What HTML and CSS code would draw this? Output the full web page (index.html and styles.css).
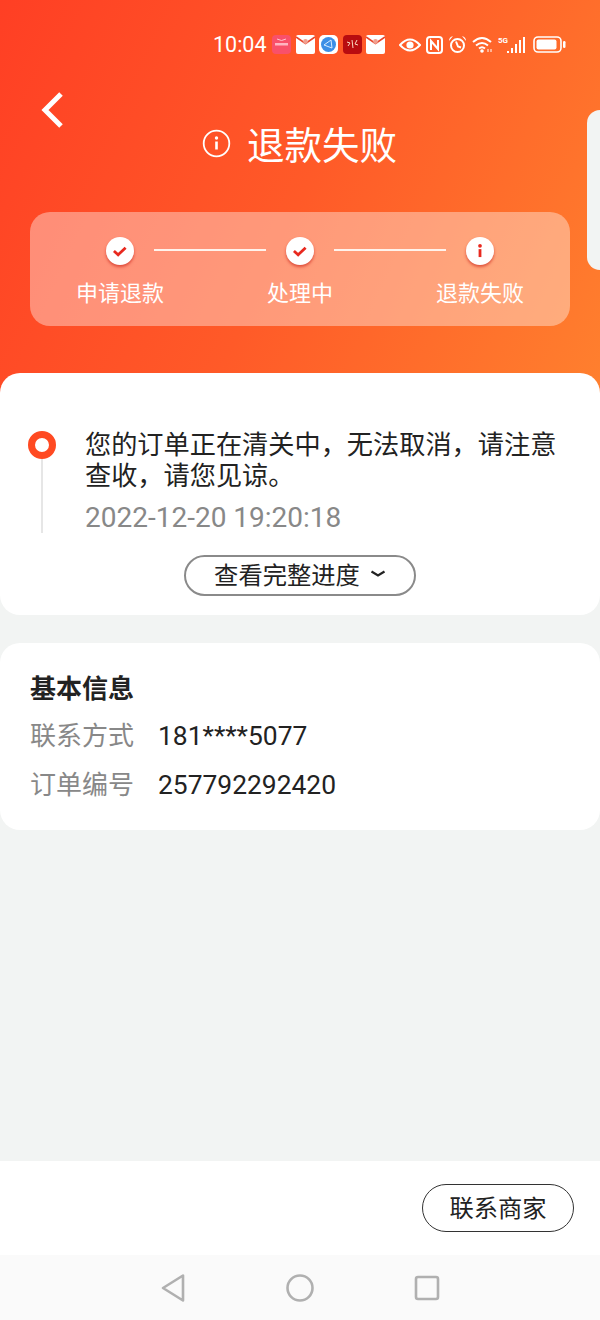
FILE: index.html
```html
<!DOCTYPE html>
<html lang="zh-CN">
<head>
  <meta charset="UTF-8">
  <meta name="viewport" content="width=device-width, initial-scale=1.0">
  <title>退款失败</title>
  <link rel="stylesheet" href="styles.css">
</head>
<body>
  <div class="page">
    <div class="top">
      <div class="status">
        <span class="time">10:04</span>
        <div class="notif">
          <svg width="19" height="19" viewBox="0 0 19 19"><rect width="19" height="19" rx="4" fill="#f9506a"/><path d="M5 4q4.500 3 9 0" stroke="#ffc4cf" fill="none"/><rect x="3" y="8" width="13" height="2.500" fill="#ffb4c2"/></svg>
          <svg width="19" height="19" viewBox="0 0 19 19"><rect width="19" height="19" rx="2" fill="#fff"/><path d="M0 2l9.500 6.500L19 2" fill="none" stroke="#e8452c" stroke-width="1.600"/><circle cx="9.500" cy="6.500" r="2.400" fill="#f0a090"/></svg>
          <svg width="19" height="19" viewBox="0 0 19 19"><rect width="19" height="19" rx="5" fill="#fff"/><circle cx="9.500" cy="9.500" r="7.500" fill="#3d8fe6"/><path d="M5 10l7-5M5 10l8 3M12 5l1 8" stroke="#d8ecff" fill="none"/></svg>
          <svg width="19" height="19" viewBox="0 0 19 19"><rect width="19" height="19" rx="4" fill="#b80c10"/><path d="M4 7l3 1-2 3M9 5l1 8M14 5l-2 4 3 1" stroke="#f8d8c0" fill="none"/></svg>
          <svg width="19" height="19" viewBox="0 0 19 19"><rect width="19" height="19" rx="2" fill="#fff"/><path d="M0 2l9.500 6.500L19 2" fill="none" stroke="#e8452c" stroke-width="1.600"/><circle cx="9.500" cy="6.500" r="2.400" fill="#f0a090"/></svg>
        </div>
        <div class="sys">
          <svg width="22" height="14" viewBox="0 0 22 14"><path d="M1 7q10-11 20 0q-10 11-20 0z" fill="none" stroke="#fff" stroke-width="2"/><circle cx="11" cy="7" r="3.600" fill="#fff"/></svg>
          <svg width="17" height="18" viewBox="0 0 17 18"><rect x="1" y="1" width="15" height="16" rx="3" fill="none" stroke="#fff" stroke-width="2"/><path d="M5 14V5l7 8V4" fill="none" stroke="#fff" stroke-width="2"/></svg>
          <svg width="19" height="19" viewBox="0 0 19 19"><circle cx="9.500" cy="10.500" r="6.500" fill="none" stroke="#fff" stroke-width="2"/><path d="M8 6.500l2 5 3 1" fill="none" stroke="#fff" stroke-width="2"/><path d="M1 6q0-4 4-5zM18 6q0-4-4-5z" fill="#fff"/></svg>
          <svg width="21" height="17" viewBox="0 0 21 17"><path d="M1 6q9-8 18 0M4 9.500q6-5 12 0M7 12.500q3-2.500 6 0" fill="none" stroke="#fff" stroke-width="2"/><circle cx="10" cy="15" r="1.800" fill="#fff"/><path d="M16 13v3M19 13v3" stroke="#fff"/></svg>
          <div class="signal">
            <span class="net">5G</span>
            <svg width="18" height="17" viewBox="0 0 18 17"><path d="M1 17v-2M5 17v-5M9 17V8M13 17V4M17 17V1" stroke="#fff" stroke-width="2"/></svg>
          </div>
          <svg width="33" height="17" viewBox="0 0 33 17"><rect x="1" y="1" width="27" height="15" rx="4" fill="none" stroke="#fff" stroke-width="1.600"/><rect x="3.500" y="3.500" width="20" height="10" rx="2" fill="#fff"/><rect x="30" y="5" width="2.500" height="7" rx="1.200" fill="#fff"/></svg>
        </div>
      </div>

      <div class="nav">
        <svg class="back" width="26" height="38" viewBox="0 0 26 38"><path d="M22 3L6 19l16 16" fill="none" stroke="#fff" stroke-width="5"/></svg>
        <div class="title">
          <svg width="29" height="29" viewBox="0 0 29 29"><circle cx="14.500" cy="14.500" r="12.800" fill="none" stroke="#fff" stroke-width="1.800"/><circle cx="14.500" cy="9" r="1.700" fill="#fff"/><rect x="13.200" y="12.500" width="2.600" height="8" fill="#fff"/></svg>
          <span>退款失败</span>
        </div>
      </div>

      <div class="steps">
        <div class="step">
          <svg class="dot" width="28" height="28" viewBox="0 0 30 30"><path d="M8.500 15l4.500 4 8-7.500" fill="none" stroke="#e8291f" stroke-width="3"/></svg>
          <span>申请退款</span>
        </div>
        <i class="line"></i>
        <div class="step">
          <svg class="dot" width="28" height="28" viewBox="0 0 30 30"><path d="M8.500 15l4.500 4 8-7.500" fill="none" stroke="#e8291f" stroke-width="3"/></svg>
          <span>处理中</span>
        </div>
        <i class="line"></i>
        <div class="step">
          <svg class="dot" width="28" height="28" viewBox="0 0 30 30"><circle cx="15" cy="9.500" r="2" fill="#e8291f"/><rect x="13.500" y="13" width="3" height="8.500" fill="#e8291f"/></svg>
          <span>退款失败</span>
        </div>
      </div>
    </div>

    <div class="peek"></div>

    <div class="card progress">
      <div class="event">
        <div class="rail"><b class="ring"></b><i class="stem"></i></div>
        <div class="event-body">
          <p class="msg">您的订单正在清关中，无法取消，请注意查收，请您见谅。</p>
          <p class="stamp">2022-12-20 19:20:18</p>
        </div>
      </div>
      <div class="more">
        <div class="pill pill-grey">查看完整进度
          <svg width="16" height="8" viewBox="0 0 16 8"><path d="M1.500 1.500l6.500 4 6.500-4" fill="none" stroke="#222" stroke-width="2.200"/></svg>
        </div>
      </div>
    </div>

    <div class="card info">
      <h2>基本信息</h2>
      <div class="row"><span class="label">联系方式</span><span class="value">181****5077</span></div>
      <div class="row"><span class="label">订单编号</span><span class="value">257792292420</span></div>
    </div>

    <div class="spacer"></div>

    <div class="actions">
      <div class="pill pill-dark">联系商家</div>
    </div>

    <div class="sysnav">
      <svg width="26" height="30" viewBox="0 0 26 30"><path d="M23 2.500v25L3 15z" fill="none" stroke="#b0b0b0" stroke-width="2.600" stroke-linejoin="round"/></svg>
      <svg width="28" height="28" viewBox="0 0 28 28"><circle cx="14" cy="14" r="12.500" fill="none" stroke="#b0b0b0" stroke-width="2.600"/></svg>
      <svg width="26" height="26" viewBox="0 0 26 26"><rect x="2" y="2" width="22" height="22" rx="2" fill="none" stroke="#b0b0b0" stroke-width="2.600"/></svg>
    </div>
  </div>
</body>
</html>
```

FILE: styles.css
```css
html, body {
  margin: 0;
  padding: 0;
  height: 100%;
  overflow: hidden;
}
body {
  font-family: "Noto Sans CJK SC", "Noto Sans", sans-serif;
  color: #222;
  background-color: #f2f4f3;
}
p, h2 {
  margin: 0;
}

.page {
  position: relative;
  display: flex;
  flex-direction: column;
  height: 1320px;
}

.top {
  height: 400px;
  box-sizing: border-box;
  padding-top: 32px;
  background: linear-gradient(115deg, #ff3f24 0%, #ff5a28 50%, #ff802e 100%);
}

.status {
  display: flex;
  align-items: center;
  height: 25px;
  padding-left: 213px;
  padding-right: 34px;
  color: #fff;
}
.time {
  font-family: Roboto, sans-serif;
  font-size: 21.500px;
  width: 59px;
}
.notif {
  display: flex;
  gap: 4.500px;
}
.sys {
  display: flex;
  align-items: center;
  gap: 5px;
  margin-left: auto;
}
.signal {
  display: flex;
  align-items: flex-end;
  margin-right: 3px;
}
.net {
  align-self: flex-start;
  width: 9px;
  font-family: Roboto, sans-serif;
  font-size: 8px;
  font-weight: 700;
  line-height: 9px;
}

.nav {
  position: relative;
  height: 155px;
}
.back {
  position: absolute;
  left: 39px;
  top: 34px;
}
.title {
  display: flex;
  align-items: center;
  gap: 16px;
  padding-left: 202px;
  padding-top: 59px;
  color: #fff;
  font-size: 37.500px;
  line-height: 54px;
}

.steps {
  display: flex;
  align-items: flex-start;
  height: 114px;
  margin: 0 30px;
  border-radius: 20px;
  background-color: rgba(255, 255, 255, 0.38);
}
.step {
  display: flex;
  flex-direction: column;
  align-items: center;
  width: 100px;
  margin-top: 25px;
  color: #fff;
  font-size: 22px;
  line-height: 32px;
}
.step:first-child {
  margin-left: 40px;
}
.dot {
  margin-bottom: 10px;
  border-radius: 50%;
  background-color: #fff;
  box-shadow: 0 2px 3px rgba(200, 30, 20, 0.6);
}
.line {
  width: 112px;
  height: 2px;
  margin: 37px -16px 0;
  background-color: #fff3ec;
}

.peek {
  position: absolute;
  right: 0;
  top: 110px;
  width: 13px;
  height: 160px;
  border-radius: 16px 0 0 16px;
  background-color: #f2f4f3;
}

.card {
  background-color: #fff;
  border-radius: 20px;
}
.progress {
  height: 242px;
  box-sizing: border-box;
  margin-top: -27px;
  padding-top: 58px;
}
.event {
  display: flex;
}
.rail {
  display: flex;
  flex-direction: column;
  align-items: center;
  width: 28px;
  margin-left: 28px;
  margin-right: 29px;
}
.ring {
  box-sizing: border-box;
  width: 28px;
  height: 28px;
  border: 7px solid #ff4a22;
  border-radius: 50%;
  background-color: #fff;
}
.stem {
  width: 2px;
  height: 74px;
  background-color: #e6e6e6;
}
.event-body {
  width: 480px;
}
.msg {
  margin-top: -3px;
  font-size: 26.200px;
  line-height: 31px;
}
.stamp {
  margin-top: 8px;
  color: #888;
  font-family: Roboto, sans-serif;
  font-size: 28px;
  line-height: 40px;
}
.more {
  display: flex;
  justify-content: center;
  margin-top: 17px;
}
.pill {
  display: flex;
  align-items: center;
  justify-content: center;
  box-sizing: border-box;
  border-radius: 24px;
  font-size: 24.300px;
  background-color: #fff;
}
.pill-grey {
  gap: 10px;
  width: 232px;
  height: 41px;
  padding-bottom: 4px;
  border: 2px solid #8a8a8a;
}
.pill-dark {
  width: 152px;
  height: 48px;
  padding-bottom: 4px;
  border: 1px solid #333;
}

.info {
  height: 187px;
  box-sizing: border-box;
  margin-top: 28px;
  padding: 25px 30px 0;
}
.info h2 {
  font-size: 26px;
  font-weight: 700;
  line-height: 38px;
  margin-bottom: 5px;
}
.row {
  display: flex;
  gap: 24px;
  height: 49px;
  align-items: center;
  font-size: 26px;
}
.label {
  color: #888;
  margin-top: -4px;
}
.value {
  font-family: Roboto, sans-serif;
  font-size: 26.400px;
}

.spacer {
  flex: 1;
}
.actions {
  display: flex;
  justify-content: flex-end;
  height: 94px;
  box-sizing: border-box;
  padding: 23px 26px 0 0;
  background-color: #fff;
}
.sysnav {
  display: flex;
  align-items: center;
  justify-content: center;
  gap: 100px;
  height: 65px;
  background-color: #fafafa;
}
```
